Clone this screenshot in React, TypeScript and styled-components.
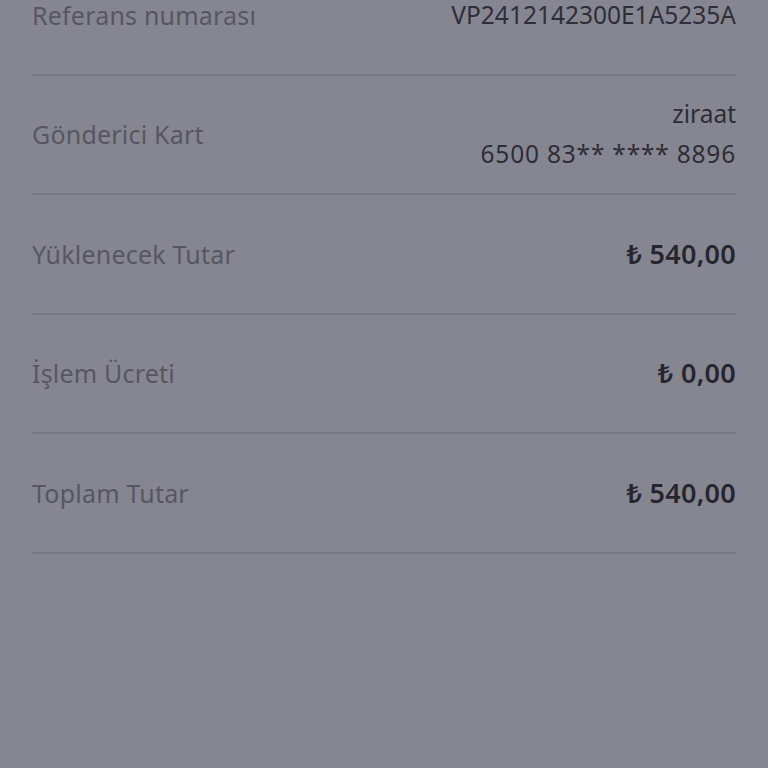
import React from "react";
import styled, { createGlobalStyle } from "styled-components";

const Global = createGlobalStyle`
  html, body { margin: 0; padding: 0; background: #868690; }
  body { font-family: "Noto Sans", "DejaVu Sans", sans-serif; overflow: hidden; }
`;

const Page = styled.div`
  width: 768px;
  height: 768px;
  background: #868690;
  overflow: hidden;
`;

const List = styled.div`
  margin: -44px 32px 0;
  display: flex;
  flex-direction: column;
`;

const Row = styled.div`
  box-sizing: border-box;
  height: 119.5px;
  border-bottom: 2px solid #7a7a85;
  display: flex;
  align-items: center;
  justify-content: space-between;
`;

const Label = styled.span`
  font-size: 25px;
  line-height: 28px;
  font-weight: 400;
  color: #575762;
  letter-spacing: 0.2px;
`;

const ValueStack = styled.div`
  display: flex;
  flex-direction: column;
  align-items: flex-end;
  gap: 12px;
`;

const Value = styled.span<{ $bold?: boolean; $wide?: boolean }>`
  font-size: ${(p) => (p.$bold ? "27px" : "24.5px")};
  font-weight: ${(p) => (p.$bold ? 600 : 400)};
  color: ${(p) => (p.$bold ? "#262630" : "#2e2e38")};
  letter-spacing: ${(p) => (p.$bold ? "0.3px" : p.$wide ? "0.8px" : "0px")};
  line-height: 28px;
`;

const rows: { label: string; values: string[]; bold?: boolean }[] = [
  { label: "Referans numarası", values: ["VP2412142300E1A5235A"] },
  { label: "Gönderici Kart", values: ["ziraat", "6500 83** **** 8896"] },
  { label: "Yüklenecek Tutar", values: ["₺ 540,00"], bold: true },
  { label: "İşlem Ücreti", values: ["₺ 0,00"], bold: true },
  { label: "Toplam Tutar", values: ["₺ 540,00"], bold: true },
];

export default function App() {
  return (
    <Page>
      <Global />
      <List>
        {rows.map((r) => (
          <Row key={r.label}>
            <Label>{r.label}</Label>
            <ValueStack>
              {r.values.map((v) => (
                <Value key={v} $bold={r.bold} $wide={v.includes("*")}>
                  {v}
                </Value>
              ))}
            </ValueStack>
          </Row>
        ))}
      </List>
    </Page>
  );
}
